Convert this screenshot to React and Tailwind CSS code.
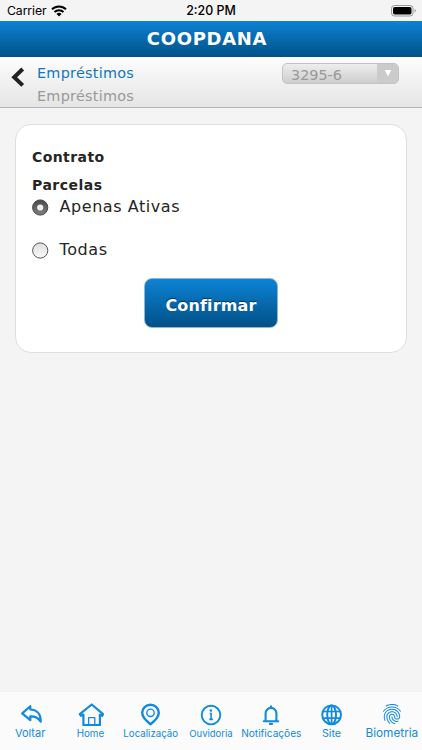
import React from 'react';
import { MdFingerprint } from 'react-icons/md';

const VERDANA = "font-['DejaVu_Sans',sans-serif]";
const SYSTEM = "font-['Inter',sans-serif]";

function StatusBar() {
  return (
    <div className={`grid h-[21px] grid-cols-3 items-center pl-[7px] pr-[6px] text-black ${SYSTEM}`}>
      <div className="flex items-center gap-[5px]">
        <span className="text-[12.3px] leading-[22px] tracking-[-0.01em]">Carrier</span>
        <svg width="16" height="12" viewBox="0 0 16 12" fill="none" stroke="#000" strokeWidth="2">
          <path d="M1 4.3a10 10 0 0 1 14 0" />
          <path d="M3.5 7a6.5 6.5 0 0 1 9 0" />
          <path d="M8 11.5 5.5 9a3.6 3.6 0 0 1 5 0Z" fill="#000" stroke="none" />
        </svg>
      </div>
      <span className="-ml-[1px] text-center text-[12.4px] font-medium leading-[22px]">2:20 PM</span>
      <svg className="justify-self-end" width="26" height="12" viewBox="0 0 26 12">
        <rect x="1.5" y="0.5" width="21.5" height="10.5" rx="3" fill="none" stroke="#999" />
        <rect x="3" y="2" width="18.5" height="7.5" rx="1.7" />
        <path d="M24.5 4v3.6q1.3-.6 1.3-1.8T24.5 4Z" fill="#999" />
      </svg>
    </div>
  );
}

function SubHeader() {
  return (
    <div className={`flex h-[51px] border-b border-[#b3b3b3] bg-gradient-to-b from-[#fdfdfd] to-[#e5e5e5] text-[14.4px] ${VERDANA}`}>
      <svg className="ml-[11px] mt-[10px]" width="14" height="21" viewBox="0 0 14 21" fill="none" stroke="#222" strokeWidth="4">
        <path d="m11.7 2-8.5 8.2 8.5 8.2" />
      </svg>
      <div className="ml-[12px] mt-[4px] flex flex-col tracking-[0.26px]">
        <span className="leading-[24px] text-[#1476bb]">Empréstimos</span>
        <span className="leading-[23.5px] text-[#999]">Empréstimos</span>
      </div>
      <div className="ml-auto mr-[23px] mt-[6px] flex h-[21px] w-[117px] overflow-hidden rounded-[5px] border border-[#c3c3c3] bg-gradient-to-b from-[#eee] to-[#cdcdcd] text-[#999]">
        <span className="flex-1 pl-[8px] leading-[22px]">3295-6</span>
        <span className="flex w-[21px] items-center justify-center bg-[#cbcbcb]">
          <svg width="8" height="7" viewBox="0 0 8 7"><path d="M.7 0h6.6L4 6.5Z" fill="#fff" /></svg>
        </span>
      </div>
    </div>
  );
}

function Radio({ checked }) {
  return (
    <svg className="mt-[3px]" width="17" height="17" viewBox="0 0 17 17">
      <defs>
        <linearGradient id="dark" x2="0" y2="1"><stop stopColor="#484848" /><stop offset="1" stopColor="#808080" /></linearGradient>
        <linearGradient id="light" x2="0" y2="1"><stop stopColor="#ddd" /><stop offset="1" stopColor="#fafafa" /></linearGradient>
      </defs>
      <circle cx="8.2" cy="8.5" r="7.6" fill={checked ? 'url(#dark)' : 'url(#light)'} stroke={checked ? '#444' : '#555'} />
      {checked && <circle cx="8.2" cy="8.5" r="3.1" fill="#eee" />}
    </svg>
  );
}

function Option({ label, checked }) {
  return (
    <div className="flex h-[22px] items-start text-[16px] leading-[22px]">
      <Radio checked={checked} />
      <span className={checked ? 'ml-[10.5px] tracking-[0.56px]' : 'ml-[10.5px] tracking-[0.6px]'}>{label}</span>
    </div>
  );
}

function Stroke({ children, width = 24, height = 24, strokeWidth = 2 }) {
  return (
    <svg width={width} height={height} viewBox={`0 0 ${width} ${height}`} fill="none" stroke="currentColor" strokeWidth={strokeWidth} strokeLinejoin="round" strokeLinecap="round">
      {children}
    </svg>
  );
}

const items = [
  { label: 'Voltar', text: 'text-[11px]', icon: (
    <Stroke strokeWidth={2.2}><path d="M12.3 4.2v3.3c6.8.3 10.7 5 10.4 12.1-2.4-4-6-5.5-10.4-5.3v3.9L4.2 11.4Z" /></Stroke>
  ) },
  { label: 'Home', text: 'text-[9.8px] pt-px', icon: (
    <Stroke width={28} strokeWidth={2.2}><path d="M3.8 12.2 15.7 2.5l11.4 9.7-1 1.6-2.2-1.2V23H7.4V12.6L5 13.8Z" /><path d="M12.6 22.5v-6.8h6.2v6.8" strokeWidth="1.3" /></Stroke>
  ) },
  { label: 'Localização', text: 'text-[9.7px] pt-px', icon: (
    <Stroke strokeWidth={2.4}><path d="M19.8 10.8c0 5-8.3 11.4-8.3 11.4S3.2 15.8 3.2 10.8a8.3 8 0 0 1 16.6 0Z" /><circle cx="11.5" cy="10.8" r="3.7" strokeWidth="1.4" /></Stroke>
  ) },
  { label: 'Ouvidoria', text: 'text-[9.5px] pt-px', icon: (
    <Stroke strokeWidth={1.9}><circle cx="12" cy="13.1" r="9.3" /><path d="M10.7 11.5h1.4v6M10.3 17.4h3.6" strokeWidth="1.6" strokeLinecap="butt" strokeLinejoin="miter" /><circle cx="11.9" cy="8.5" r=".7" strokeWidth="1.2" /></Stroke>
  ) },
  { label: 'Notificações', text: 'text-[10.1px]', icon: (
    <Stroke strokeWidth={2.1}><path d="M4.8 19.3h14.4M6.6 19V11.5a5.4 5.6 0 0 1 10.8 0V19M12 4.3v1.3" /><path d="M11 21.9h2" strokeWidth="2.3" /></Stroke>
  ) },
  { label: 'Site', text: 'text-[10.7px] pt-px', icon: (
    <Stroke><circle cx="11.6" cy="12.8" r="9.4" /><ellipse cx="11.6" cy="12.8" rx="4.4" ry="9.3" /><path d="M11.6 3.8v18M3.2 9.5h16.8M3.2 16.1h16.8" strokeWidth="1.7" /></Stroke>
  ) },
  { label: 'Biometria', text: 'text-[11.8px]', icon: <MdFingerprint size={24} /> },
];

export default function App() {
  return (
    <div className="flex h-[750px] w-[422px] flex-col overflow-hidden bg-[#f4f4f4]">
      <StatusBar />
      <header className={`flex h-[36px] items-center justify-center bg-gradient-to-b from-[#0c83d5] to-[#035187] pb-[1px] pr-[8px] text-[18px] font-bold tracking-[0.7px] text-white ${VERDANA}`}>
        COOPDANA
      </header>
      <SubHeader />
      <main className={`ml-[15px] mr-[15.5px] mt-[16px] flex h-[229px] flex-col rounded-[16px] border border-[#dedede] bg-white pl-[16px] text-[#252525] ${VERDANA}`}>
        <h2 className="mt-[21px] text-[14px] font-bold leading-[22px] tracking-[0.42px]">Contrato</h2>
        <h3 className="mt-[6px] text-[14px] font-bold leading-[22px] tracking-[0.5px]">Parcelas</h3>
        <div className="flex flex-col gap-[21px]">
          <Option label="Apenas Ativas" checked />
          <Option label="Todas" />
        </div>
        <button className="ml-[112px] mt-[17px] h-[50px] w-[134px] rounded-[8px] border border-[#8fb6d1] bg-gradient-to-b from-[#0c83d5] to-[#035187] pt-[5px] text-[16px] font-bold tracking-[0.15px] text-white [text-shadow:0_-1px_1px_#023557]">
          Confirmar
        </button>
      </main>
      <nav className={`mt-auto grid h-[58px] grid-cols-7 bg-[#fbfbfb] text-[#108be0] ${SYSTEM}`}>
        {items.map((item) => (
          <div key={item.label} className="flex flex-col items-center">
            <div className="mt-[10px] flex h-[24px] items-center">{item.icon}</div>
            <span className={`whitespace-nowrap leading-[14px] ${item.text}`}>{item.label}</span>
          </div>
        ))}
      </nav>
    </div>
  );
}
